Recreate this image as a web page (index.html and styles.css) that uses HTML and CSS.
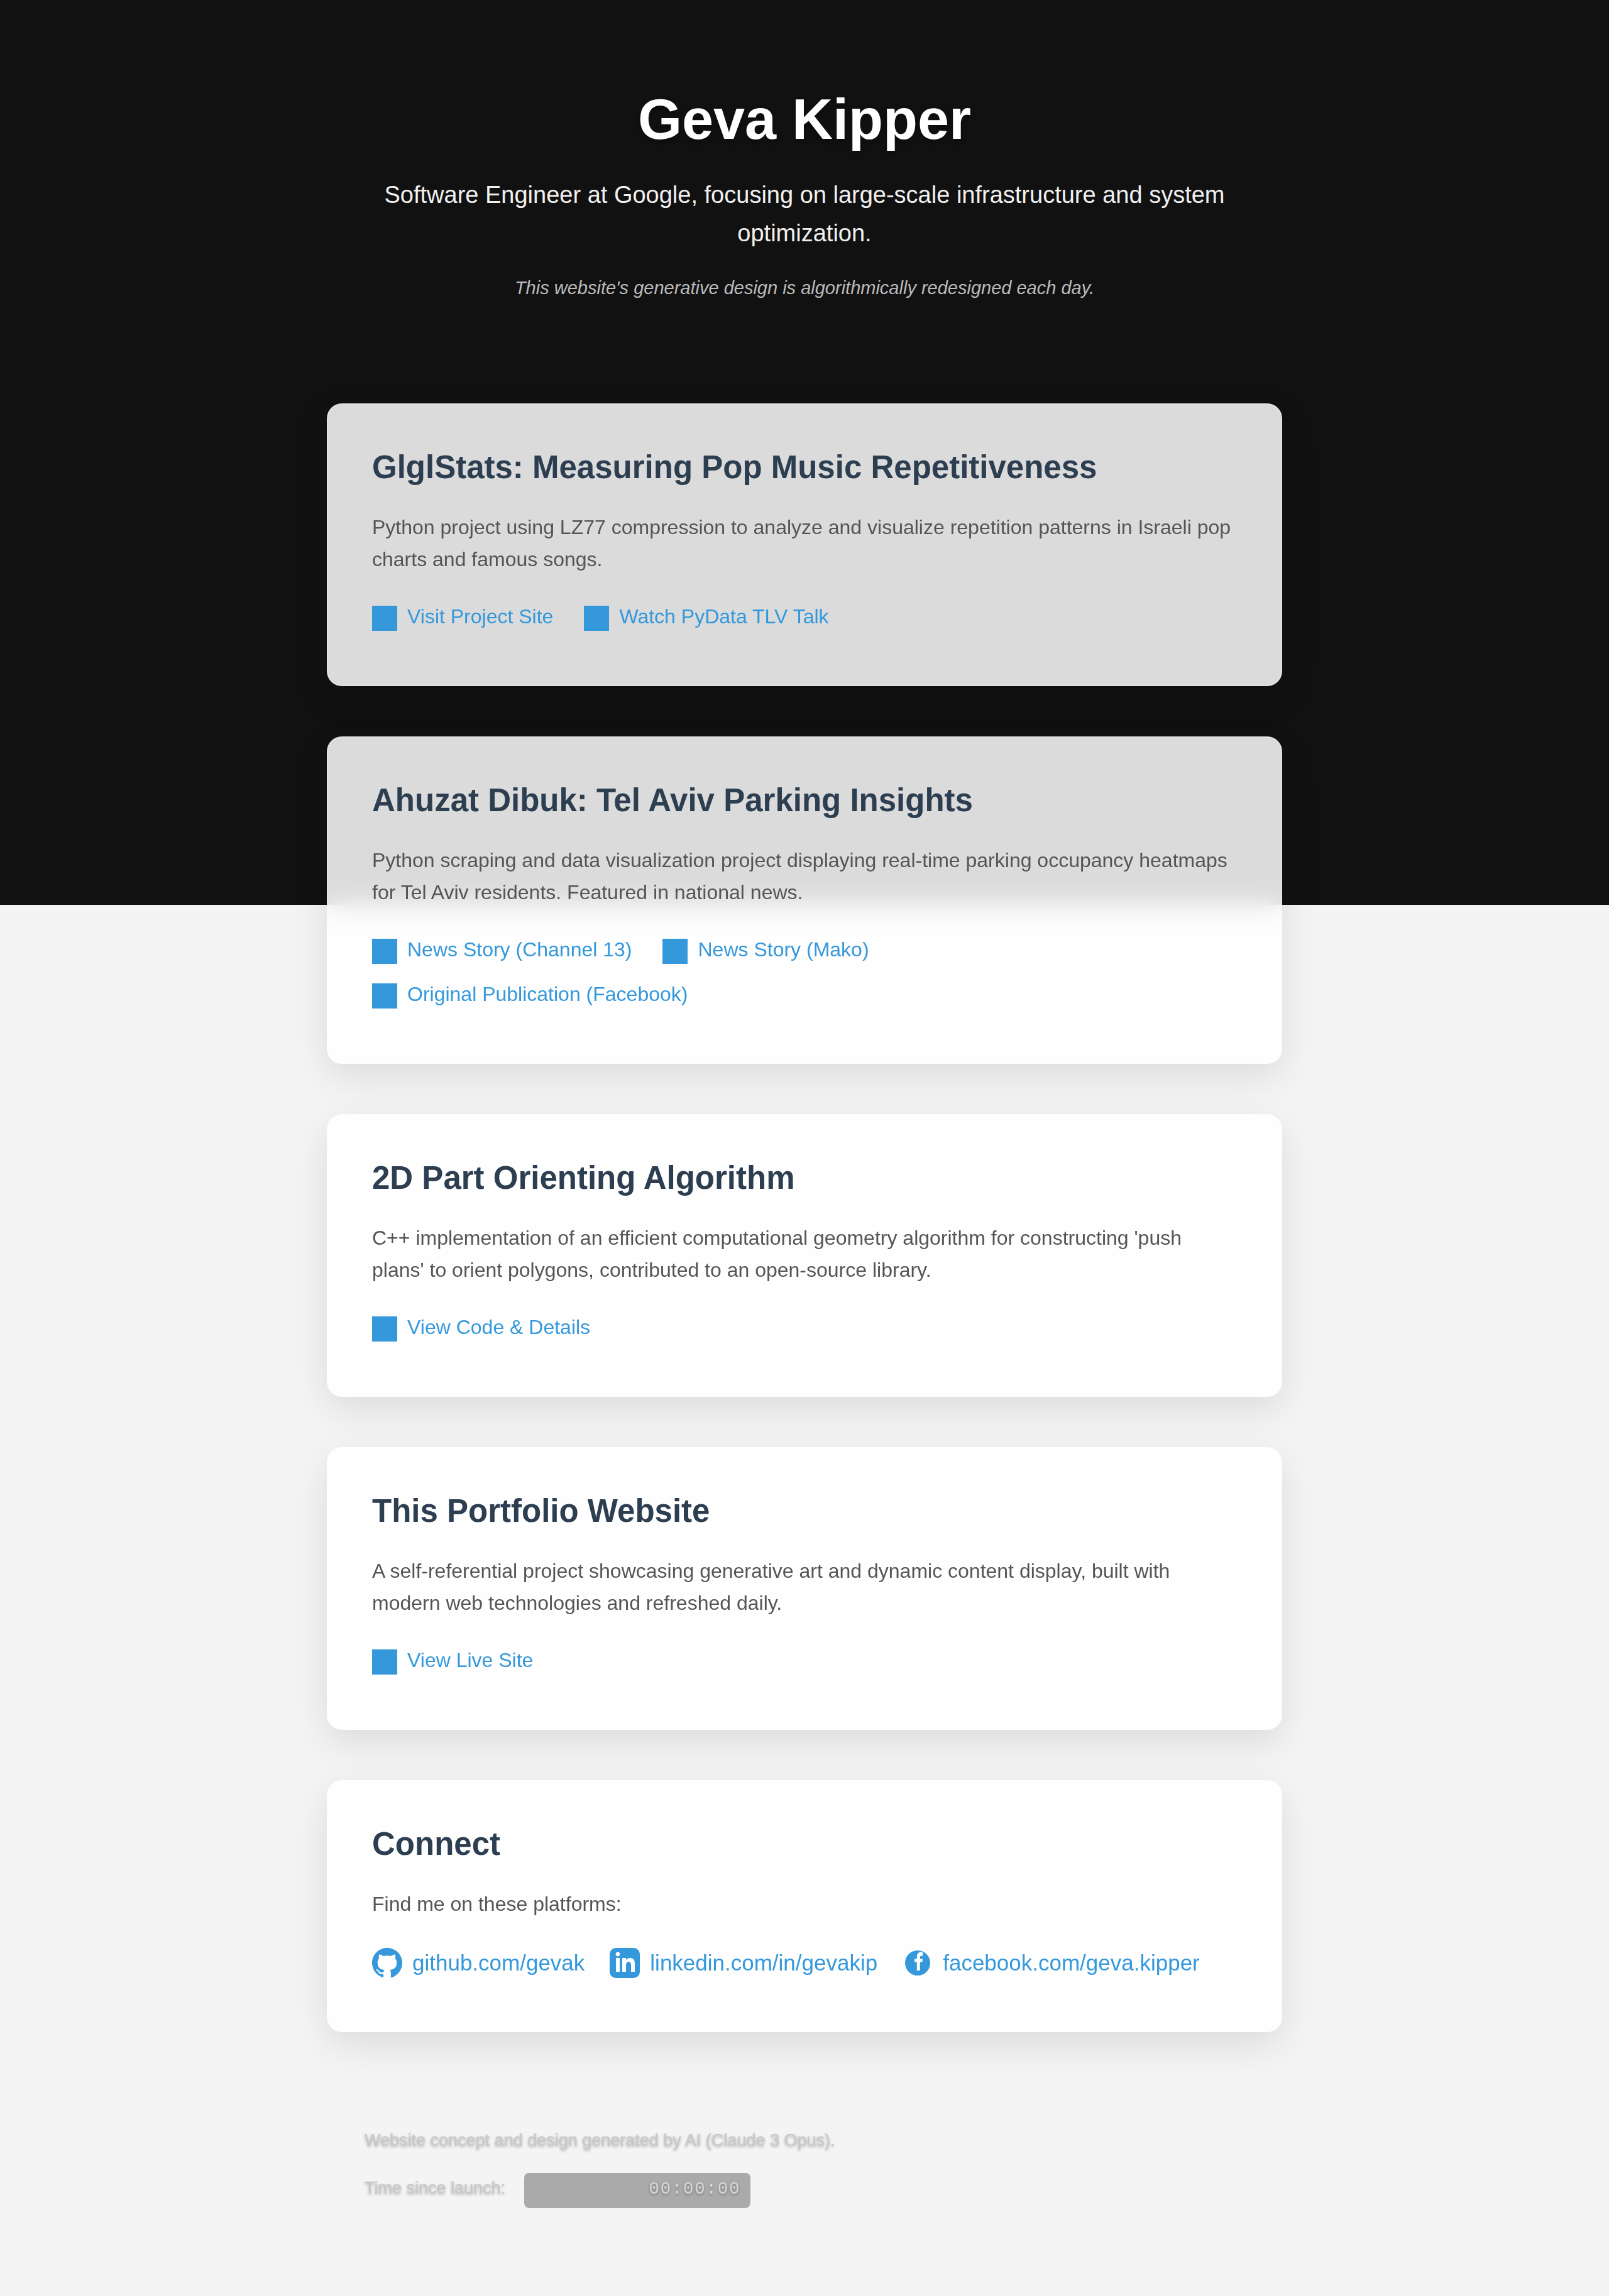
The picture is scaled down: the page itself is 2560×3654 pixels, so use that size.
FILE: index.html
```html
<!DOCTYPE html>
<html lang="en">
<head>
<meta charset="utf-8">
<meta name="viewport" content="width=device-width, initial-scale=1">
<title>Geva Kipper</title>
<link rel="stylesheet" href="styles.css">
</head>
<body>
<div class="backdrop"></div>
<div class="page">
<header class="hero">
<h1>Geva Kipper</h1>
<p class="tagline">Software Engineer at Google, focusing on large-scale infrastructure and system optimization.</p>
<p class="note">This website's generative design is algorithmically redesigned each day.</p>
</header>
<main class="cards">
<section class="card">
<h2>GlglStats: Measuring Pop Music Repetitiveness</h2>
<p>Python project using LZ77 compression to analyze and visualize repetition patterns in Israeli pop charts and famous songs.</p>
<div class="links">
<a href="#site"><span class="marker"></span>Visit Project Site</a>
<a href="#talk"><span class="marker"></span>Watch PyData TLV Talk</a>
</div>
</section>
<section class="card">
<h2>Ahuzat Dibuk: Tel Aviv Parking Insights</h2>
<p>Python scraping and data visualization project displaying real-time parking occupancy heatmaps for Tel Aviv residents. Featured in national news.</p>
<div class="links">
<a href="#channel13"><span class="marker"></span>News Story (Channel 13)</a>
<a href="#mako"><span class="marker"></span>News Story (Mako)</a>
<a href="#facebook"><span class="marker"></span>Original Publication (Facebook)</a>
</div>
</section>
<section class="card">
<h2>2D Part Orienting Algorithm</h2>
<p>C++ implementation of an efficient computational geometry algorithm for constructing 'push plans' to orient polygons, contributed to an open-source library.</p>
<div class="links">
<a href="#code"><span class="marker"></span>View Code &amp; Details</a>
</div>
</section>
<section class="card">
<h2>This Portfolio Website</h2>
<p>A self-referential project showcasing generative art and dynamic content display, built with modern web technologies and refreshed daily.</p>
<div class="links">
<a href="#live"><span class="marker"></span>View Live Site</a>
</div>
</section>
<section class="card">
<h2>Connect</h2>
<p>Find me on these platforms:</p>
<div class="social">
<a href="https://github.com/gevak"><svg viewBox="0 0 24 24" aria-hidden="true"><path d="M12 0C5.37 0 0 5.37 0 12c0 5.303 3.438 9.8 8.205 11.385.6.113.82-.258.82-.577 0-.285-.01-1.04-.015-2.04-3.338.724-4.042-1.61-4.042-1.61C4.422 18.07 3.633 17.7 3.633 17.7c-1.087-.744.084-.729.084-.729 1.205.084 1.838 1.236 1.838 1.236 1.07 1.835 2.809 1.305 3.495.998.108-.776.417-1.305.76-1.605-2.665-.3-5.466-1.332-5.466-5.93 0-1.31.465-2.38 1.235-3.22-.135-.303-.54-1.523.105-3.176 0 0 1.005-.322 3.3 1.23.96-.267 1.98-.399 3-.405 1.02.006 2.04.138 3 .405 2.28-1.552 3.285-1.23 3.285-1.23.645 1.653.24 2.873.12 3.176.765.84 1.23 1.91 1.23 3.22 0 4.61-2.805 5.625-5.475 5.92.42.36.81 1.096.81 2.22 0 1.606-.015 2.896-.015 3.286 0 .315.21.69.825.57C20.565 21.795 24 17.295 24 12c0-6.63-5.37-12-12-12z"/></svg>github.com/gevak</a>
<a href="https://linkedin.com/in/gevakip"><svg viewBox="0 0 24 24" aria-hidden="true"><path d="M19 0H5a5 5 0 0 0-5 5v14a5 5 0 0 0 5 5h14a5 5 0 0 0 5-5V5a5 5 0 0 0-5-5zM8 19H5V8h3v11zM6.500 6.732c-.966 0-1.750-.790-1.750-1.764s.784-1.764 1.750-1.764 1.750.790 1.750 1.764-.783 1.764-1.750 1.764zM20 19h-3v-5.604c0-3.368-4-3.113-4 0V19h-3V8h3v1.765c1.396-2.586 7-2.777 7 2.476V19z"/></svg>linkedin.com/in/gevakip</a>
<a href="https://facebook.com/geva.kipper"><svg viewBox="0 0 24 24" aria-hidden="true"><path fill-rule="evenodd" d="M12 2a10 10 0 1 0 0 20 10 10 0 0 0 0-20zM11.400 18v-6.700H9.500V8.700h1.900V7c0-2.200 1.200-3.600 3.200-3.600H16V6.400h-1c-.8 0-1.100.3-1.100 1v1.300H16l-.3 2.600h-1.800V18z"/></svg>facebook.com/geva.kipper</a>
</div>
</section>
</main>
<footer class="footer">
<p>Website concept and design generated by AI (Claude 3 Opus).</p>
<p class="timer">Time since launch: <time class="clock">00:00:00</time></p>
</footer>
</div>
</body>
</html>
```
FILE: styles.css
```css
* {
  box-sizing: border-box;
}

body {
  position: relative;
  margin: 0;
  background: #f4f4f4;
  color: #333;
  font: 32px/51px "Liberation Sans", Arial, sans-serif;
}

h1, h2, p {
  margin: 0;
}

.backdrop {
  position: absolute;
  inset: 0 0 auto;
  height: 1440px;
  background: #111;
}

.page {
  position: relative;
  max-width: 1520px;
  margin: 0 auto;
  padding-bottom: 140px;
}

.hero {
  padding: 120px 60px 160px;
  text-align: center;
}

.hero h1 {
  margin-bottom: 20px;
  color: #fff;
  font-size: 90px;
  line-height: 140px;
  text-shadow: 0 4px 8px rgba(0, 0, 0, 0.3);
}

.hero .tagline {
  margin-bottom: 32px;
  color: #f0f0f0;
  font-size: 38px;
  line-height: 61px;
}

.hero .note {
  color: #bbb;
  font-size: 29px;
  line-height: 48px;
  font-style: italic;
}

.cards {
  display: flex;
  flex-direction: column;
  gap: 80px;
}

.card {
  padding: 70px;
  border: 2px solid rgba(255, 255, 255, 0.2);
  border-radius: 24px;
  background: rgba(255, 255, 255, 0.85);
  box-shadow: 0 20px 60px rgba(0, 0, 0, 0.1);
  backdrop-filter: blur(20px);
}

.card h2 {
  margin-bottom: 40px;
  color: #2c3e50;
  font-size: 51px;
  line-height: 60px;
}

.card p {
  margin-bottom: 40px;
  color: #555;
}

.card a {
  color: #3498db;
  text-decoration: none;
}

.links {
  display: flex;
  flex-wrap: wrap;
  row-gap: 20px;
  margin-bottom: 13px;
}

.links a {
  margin-right: 49px;
}

.marker {
  display: inline-block;
  width: 40px;
  height: 40px;
  margin-right: 16px;
  background: #3498db;
  vertical-align: middle;
}

.social {
  display: flex;
  flex-wrap: wrap;
  gap: 20px 40px;
  margin-bottom: 10px;
}

.social a {
  display: flex;
  align-items: center;
  gap: 16px;
  font-size: 35px;
  line-height: 56px;
}

.social svg {
  width: 48px;
  height: 48px;
  fill: currentColor;
}

.footer {
  padding: 144px 60px 0;
  color: #c8c8c8;
  font-size: 27px;
  line-height: 56px;
  text-shadow: 0 2px 4px rgba(0, 0, 0, 0.3);
}

.timer {
  display: flex;
  align-items: baseline;
  gap: 30px;
  margin-top: 20px;
}

.clock {
  width: 360px;
  padding: 0 16px 4px;
  border-radius: 8px;
  background: #aaa;
  color: #d8d8d8;
  font-family: "Liberation Mono", monospace;
  line-height: 52px;
  letter-spacing: 2px;
  text-align: right;
}
```
